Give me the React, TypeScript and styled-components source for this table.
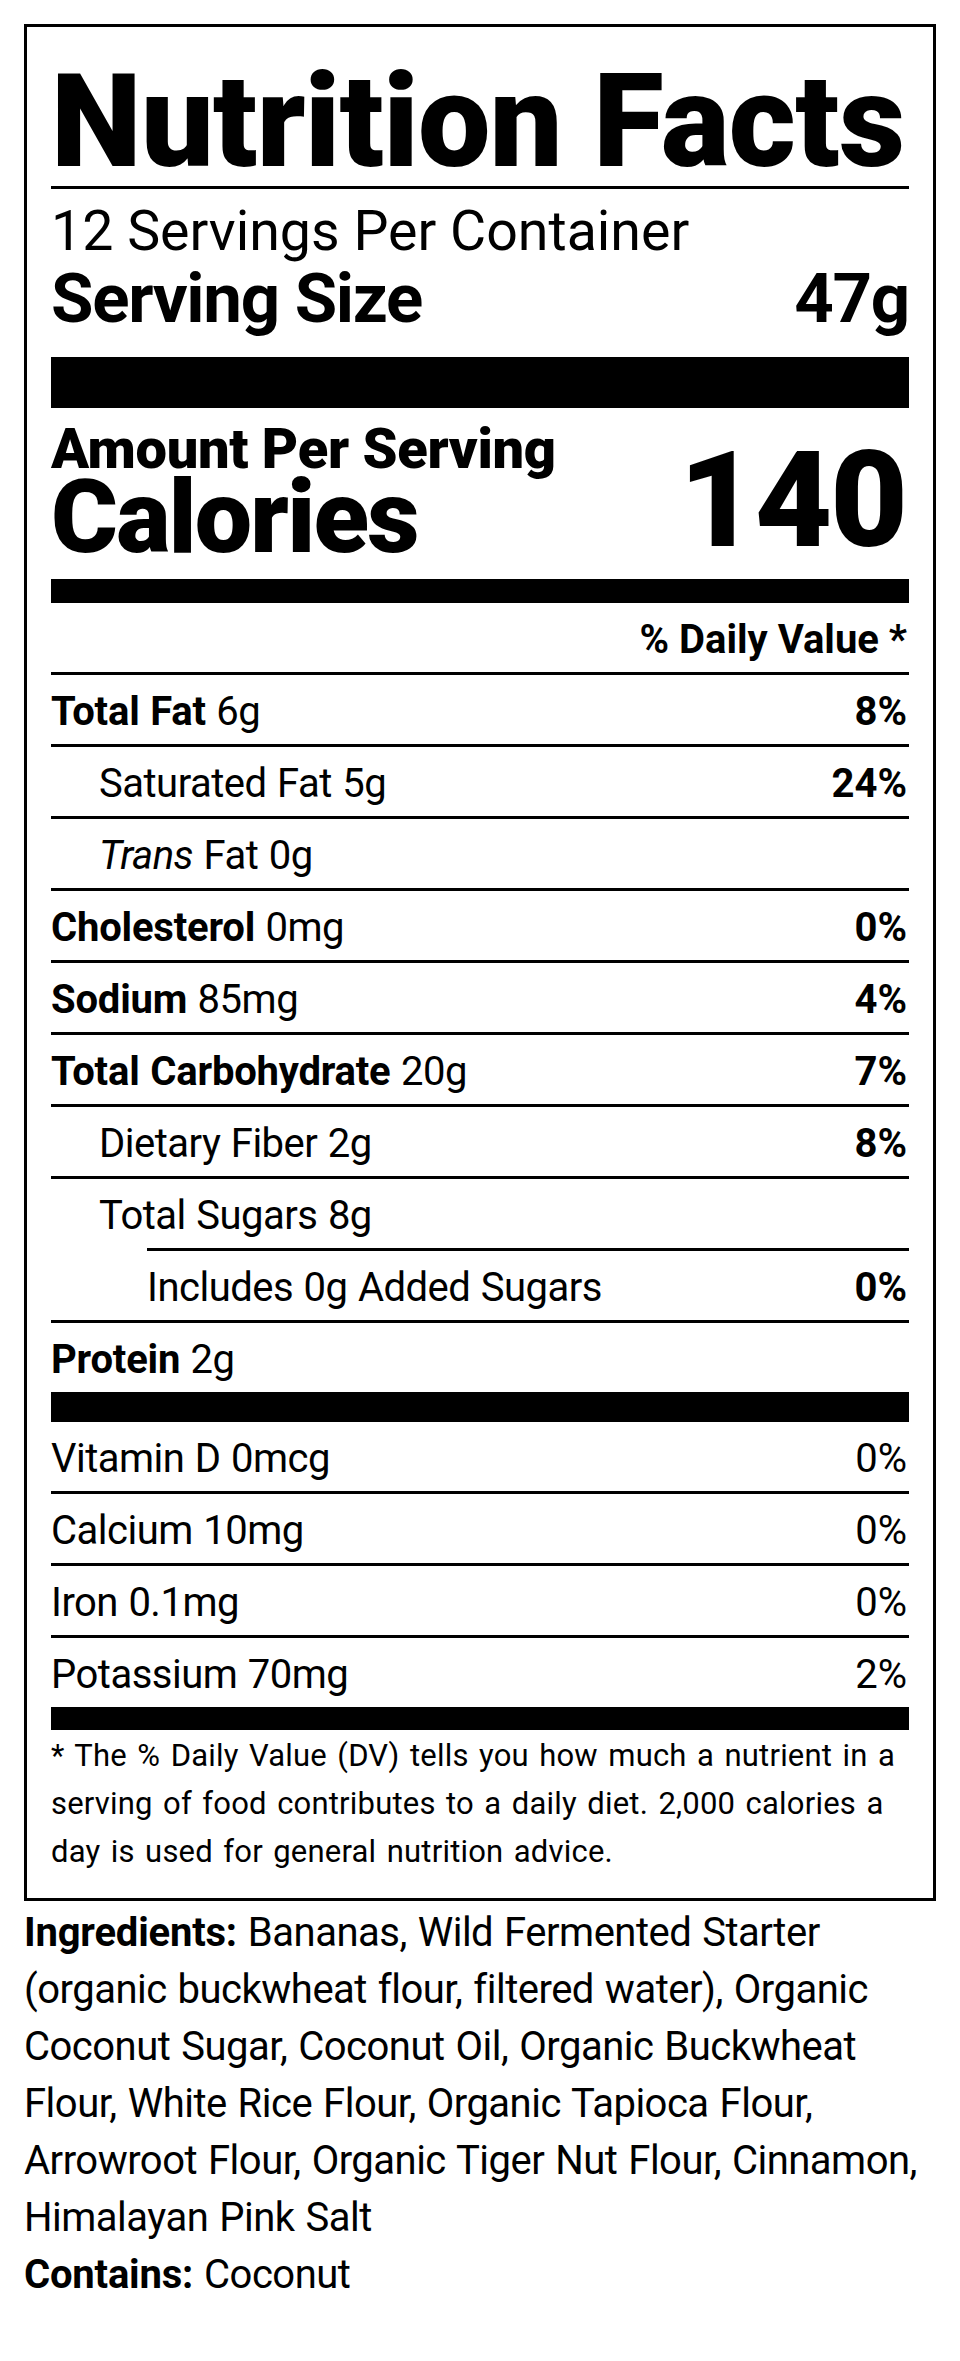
import React from 'react';
import styled, { createGlobalStyle } from 'styled-components';

const GlobalStyle = createGlobalStyle`
  html, body { margin: 0; padding: 0; background: #fff; }
  body {
    font-family: Roboto, "Liberation Sans", Arial, sans-serif;
    color: #000;
  }
  * { box-sizing: border-box; }
`;

const Page = styled.main`
  padding: 24px;
`;

const Label = styled.section`
  border: 3px solid #000;
  padding: 30px 24px 22px;
`;

const Title = styled.h1`
  margin: 0;
  font-size: 129px;
  line-height: 129px;
  font-weight: 900;
  letter-spacing: -0.7px;
  white-space: nowrap;
  border-bottom: 3px solid #000;
`;

const ServingInfo = styled.div`
  padding: 16px 0 24px;
`;

const Servings = styled.div`
  font-size: 55.5px;
  line-height: 54px;
`;

const SizeRow = styled.div`
  display: flex;
  justify-content: space-between;
  margin-top: 5px;
  font-size: 69px;
  line-height: 69px;
  font-weight: 700;
  letter-spacing: -1.3px;
`;

const Bar = styled.div<{ $h: number }>`
  height: ${(p) => p.$h}px;
  background: #000;
`;

const CalorieBlock = styled.div`
  display: flex;
  justify-content: space-between;
  align-items: flex-end;
  padding: 13px 0 21px;
`;

const AmountLabel = styled.div`
  font-size: 56px;
  line-height: 56px;
  font-weight: 900;
  letter-spacing: -0.3px;
`;

const CaloriesLabel = styled.div`
  font-size: 102px;
  line-height: 81px;
  font-weight: 900;
  letter-spacing: -1.8px;
`;

const CalorieValue = styled.div`
  font-size: 134px;
  line-height: 115px;
  font-weight: 900;
  letter-spacing: -2px;
  padding-right: 3px;
`;

const Row = styled.div<{ $indent?: number; $rule?: boolean }>`
  display: flex;
  justify-content: space-between;
  align-items: center;
  height: ${(p) => (p.$rule === false ? 69 : 72)}px;
  padding: 5px 0 0 ${(p) => p.$indent ?? 0}px;
  font-size: 40px;
  line-height: 64px;
  letter-spacing: -0.5px;
  word-spacing: 1px;
  border-bottom: ${(p) => (p.$rule === false ? 'none' : '3px solid #000')};
  white-space: nowrap;
`;

const HeaderRow = styled(Row)`
  justify-content: flex-end;
  font-weight: 700;
  letter-spacing: 0;
  word-spacing: 0;
`;

const SubRule = styled.div<{ $indent: number }>`
  height: 3px;
  margin-left: ${(p) => p.$indent}px;
  background: #000;
`;

const Nutrient = styled.b`
  font-weight: 700;
  letter-spacing: -0.2px;
`;

const Value = styled.span<{ $bold?: boolean }>`
  font-weight: ${(p) => (p.$bold ? 700 : 400)};
  letter-spacing: 0;
  padding-right: 2px;
`;

const Trans = styled.i`
  font-style: italic;
`;

const Footnote = styled.p`
  margin: 0;
  padding-top: 2px;
  font-size: 31px;
  line-height: 48px;
  letter-spacing: 0.2px;
  word-spacing: 2.5px;
  white-space: nowrap;
`;

const Ingredients = styled.div`
  margin-top: 3px;
  font-size: 40px;
  line-height: 57px;
  letter-spacing: -0.5px;
  word-spacing: 1.5px;
`;

const Para = styled.p`
  margin: 0;
`;

type Item = {
  name: React.ReactNode;
  amount: string;
  dv?: string;
  bold?: boolean;
  indent?: number;
};

const mainRows: Item[] = [
  { name: 'Total Fat', amount: '6g', dv: '8%', bold: true },
  { name: 'Saturated Fat', amount: '5g', dv: '24%', indent: 48 },
  { name: <><Trans>Trans</Trans> Fat</>, amount: '0g', indent: 48 },
  { name: 'Cholesterol', amount: '0mg', dv: '0%', bold: true },
  { name: 'Sodium', amount: '85mg', dv: '4%', bold: true },
  { name: 'Total Carbohydrate', amount: '20g', dv: '7%', bold: true },
  { name: 'Dietary Fiber', amount: '2g', dv: '8%', indent: 48 },
];

const vitamins = [
  { name: 'Vitamin D', amount: '0mcg', dv: '0%' },
  { name: 'Calcium', amount: '10mg', dv: '0%' },
  { name: 'Iron', amount: '0.1mg', dv: '0%' },
  { name: 'Potassium', amount: '70mg', dv: '2%' },
];

const NutrientLine: React.FC<{ item: Item }> = ({ item }) => (
  <Row $indent={item.indent}>
    <span>
      {item.bold ? <Nutrient>{item.name}</Nutrient> : item.name} {item.amount}
    </span>
    {item.dv && <Value $bold>{item.dv}</Value>}
  </Row>
);

export default function App() {
  return (
    <Page>
      <GlobalStyle />
      <Label>
        <Title>Nutrition Facts</Title>
        <ServingInfo>
          <Servings>12 Servings Per Container</Servings>
          <SizeRow>
            <span>Serving Size</span>
            <span>47g</span>
          </SizeRow>
        </ServingInfo>
        <Bar $h={51} />
        <CalorieBlock>
          <div>
            <AmountLabel>Amount Per Serving</AmountLabel>
            <CaloriesLabel>Calories</CaloriesLabel>
          </div>
          <CalorieValue>140</CalorieValue>
        </CalorieBlock>
        <Bar $h={24} />
        <HeaderRow>
          <Value $bold>% Daily Value *</Value>
        </HeaderRow>
        {mainRows.map((r, i) => (
          <NutrientLine key={i} item={r} />
        ))}
        <Row $indent={48} $rule={false}>
          <span>Total Sugars 8g</span>
        </Row>
        <SubRule $indent={96} />
        <Row $indent={96}>
          <span>Includes 0g Added Sugars</span>
          <Value $bold>0%</Value>
        </Row>
        <Row $rule={false}>
          <span>
            <Nutrient>Protein</Nutrient> 2g
          </span>
        </Row>
        <Bar $h={30} />
        {vitamins.map((v, i) => (
          <Row key={v.name} $rule={i < vitamins.length - 1}>
            <span>
              {v.name} {v.amount}
            </span>
            <Value>{v.dv}</Value>
          </Row>
        ))}
        <Bar $h={23} />
        <Footnote>
          * The % Daily Value (DV) tells you how much a nutrient in a<br />
          serving of food contributes to a daily diet. 2,000 calories a<br />
          day is used for general nutrition advice.
        </Footnote>
      </Label>
      <Ingredients>
        <Para>
          <Nutrient>Ingredients:</Nutrient> Bananas, Wild Fermented Starter (organic buckwheat
          flour, filtered water), Organic Coconut Sugar, Coconut Oil, Organic Buckwheat Flour,
          White Rice Flour, Organic Tapioca Flour, Arrowroot Flour, Organic Tiger Nut Flour,
          Cinnamon, Himalayan Pink Salt
        </Para>
        <Para>
          <Nutrient>Contains:</Nutrient> Coconut
        </Para>
      </Ingredients>
    </Page>
  );
}
